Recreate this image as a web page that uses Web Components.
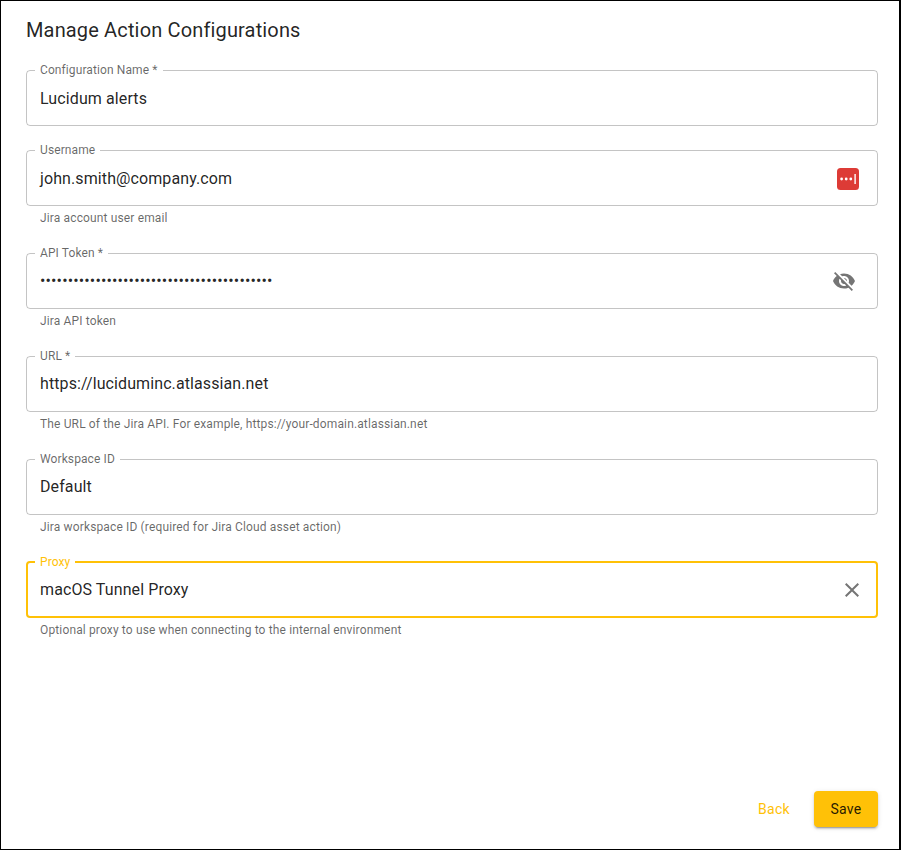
<!DOCTYPE html>
<html>
<head>
<meta charset="utf-8">
<title>Manage Action Configurations</title>
<style>
  html, body { margin: 0; height: 100%; background: #fff; }
</style>
</head>
<body>
<config-dialog title-text="Manage Action Configurations">
  <outlined-field label="Configuration Name *" value="Lucidum alerts"></outlined-field>
  <outlined-field label="Username" value="john.smith@company.com" helper="Jira account user email">
    <svg slot="adornment" width="22" height="22" viewBox="0 0 22 22" style="margin-right:5px">
      <rect width="22" height="22" rx="3.5" fill="#dd3b36"/>
      <circle cx="4.6" cy="11" r="1.4" fill="#fff"/><circle cx="9.2" cy="11" r="1.4" fill="#fff"/><circle cx="13.8" cy="11" r="1.4" fill="#fff"/>
      <rect x="17.4" y="6" width="1.4" height="10" fill="#fff"/>
    </svg>
  </outlined-field>
  <outlined-field masked label="API Token *" value="••••••••••••••••••••••••••••••••••••••••••" helper="Jira API token">
    <svg slot="adornment" width="24" height="24" viewBox="0 0 24 24" fill="#757575" style="margin-right:8px"><path d="M12 7c2.76 0 5 2.24 5 5 0 .65-.13 1.26-.36 1.83l2.92 2.92c1.51-1.26 2.7-2.89 3.43-4.75-1.73-4.39-6-7.5-11-7.5-1.4 0-2.74.25-3.98.7l2.16 2.16C10.74 7.13 11.35 7 12 7zM2 4.27l2.28 2.28.46.46C3.08 8.3 1.78 10.02 1 12c1.73 4.39 6 7.5 11 7.5 1.55 0 3.03-.3 4.38-.84l.42.42L19.73 22 21 20.73 3.27 3 2 4.27zM7.53 9.8l1.55 1.55c-.05.21-.08.43-.08.65 0 1.66 1.34 3 3 3 .22 0 .44-.03.65-.08l1.55 1.55c-.67.33-1.41.53-2.2.53-2.76 0-5-2.24-5-5 0-.79.2-1.53.53-2.2zm4.31-.78l3.15 3.15.02-.16c0-1.66-1.34-3-3-3l-.17.01z"/></svg>
  </outlined-field>
  <outlined-field label="URL *" value="https://luciduminc.atlassian.net" helper="The URL of the Jira API. For example, https://your-domain.atlassian.net"></outlined-field>
  <outlined-field label="Workspace ID" value="Default" helper="Jira workspace ID (required for Jira Cloud asset action)"></outlined-field>
  <outlined-field focused label="Proxy" value="macOS Tunnel Proxy" helper="Optional proxy to use when connecting to the internal environment">
    <svg slot="adornment" width="24" height="24" viewBox="0 0 24 24" fill="#757575"><path d="M19 6.41L17.59 5 12 10.59 6.41 5 5 6.41 10.59 12 5 17.59 6.41 19 12 13.41 17.59 19 19 17.59 13.41 12z"/></svg>
  </outlined-field>
  <action-button slot="actions" variant="text">Back</action-button>
  <action-button slot="actions" variant="contained">Save</action-button>
</config-dialog>

<script>
window.customElements.define('config-dialog',
  class ConfigDialog extends HTMLElement {
    constructor() {
      super()
      this.attachShadow({ mode: "open" })
      const title = this.getAttribute('title-text') || ""
      this.shadowRoot.innerHTML = `
        <style>
          :host {
            box-sizing: border-box;
            display: flex;
            flex-direction: column;
            height: 850px;
            width: 901px;
            background: linear-gradient(#7a6516 0 30px, #3a3a3a 30px) left top / 1px 100% no-repeat border-box #fff;
            border: solid #000;
            border-width: 1px 2px 1px 1px;
            padding: 16px 21px 22px 25px;
            font-family: Roboto, "Liberation Sans", sans-serif;
          }
          h2 {
            color: rgba(0, 0, 0, .87);
            font-size: 20px;
            font-weight: 400;
            letter-spacing: .15px;
            line-height: 26px;
            margin: 0 0 22.3px;
          }
          .fields {
            display: flex;
            flex: 1;
            flex-direction: column;
            gap: 19px;
          }
          .actions {
            align-items: center;
            display: flex;
            gap: 8px;
            justify-content: flex-end;
          }
        </style>
        <h2>${title}</h2>
        <div class="fields"><slot></slot></div>
        <div class="actions"><slot name="actions"></slot></div>`
    }
  }
)

window.customElements.define('outlined-field',
  class OutlinedField extends HTMLElement {
    constructor() {
      super()
      this.attachShadow({ mode: "open" })
      const label = this.getAttribute('label') || ""
      const value = this.getAttribute('value') || ""
      const helper = this.getAttribute('helper')
      this.shadowRoot.innerHTML = `
        <style>
          :host {
            display: block;
            --line: rgba(0, 0, 0, .23);
            --label: rgba(0, 0, 0, .6);
            --width: 1px;
          }
          :host([focused]) {
            --line: #ffc107;
            --label: #ffc107;
            --width: 2px;
          }
          fieldset {
            align-items: center;
            border: var(--width) solid var(--line);
            border-radius: 4px;
            box-sizing: border-box;
            display: flex;
            height: 61px;
            margin: 0;
            min-width: 0;
            padding: 0 calc(14px - var(--width)) 3.6px calc(14px - var(--width));
          }
          legend {
            color: var(--label);
            font-size: 12px;
            letter-spacing: .1px;
            line-height: 10px;
            margin-left: -5px;
            padding: 0 5px;
          }
          .value {
            color: rgba(0, 0, 0, .87);
            flex: 1;
            font-size: 16px;
            letter-spacing: .1px;
            line-height: 24px;
            white-space: nowrap;
          }
          :host([masked]) .value { letter-spacing: .14px; }
          .adornment { align-items: center; display: flex; }
          p {
            color: rgba(0, 0, 0, .6);
            font-size: 12px;
            letter-spacing: .14px;
            line-height: 1.66;
            margin: 3px 0 0 14px;
          }
        </style>
        <fieldset>
          <legend>${label}</legend>
          <span class="value">${value}</span>
          <span class="adornment"><slot name="adornment"></slot></span>
        </fieldset>
        ${helper ? `<p>${helper}</p>` : ""}`
    }
  }
)

window.customElements.define('action-button',
  class ActionButton extends HTMLElement {
    constructor() {
      super()
      this.attachShadow({ mode: "open" })
      this.shadowRoot.innerHTML = `
        <style>
          :host {
            align-items: center;
            border-radius: 4px;
            box-sizing: border-box;
            color: #ffc107;
            cursor: pointer;
            display: inline-flex;
            font-size: 14px;
            font-weight: 400;
            height: 36px;
            justify-content: center;
            letter-spacing: .3px;
            min-width: 64px;
            padding: 0 8px;
          }
          :host([variant="contained"]) {
            background: #ffc107;
            box-shadow: 0 3px 1px -2px rgba(0,0,0,.2), 0 2px 2px 0 rgba(0,0,0,.14), 0 1px 5px 0 rgba(0,0,0,.12);
            color: rgba(0, 0, 0, .87);
          }
        </style>
        <slot></slot>`
    }
  }
)
</script>
</body>
</html>
